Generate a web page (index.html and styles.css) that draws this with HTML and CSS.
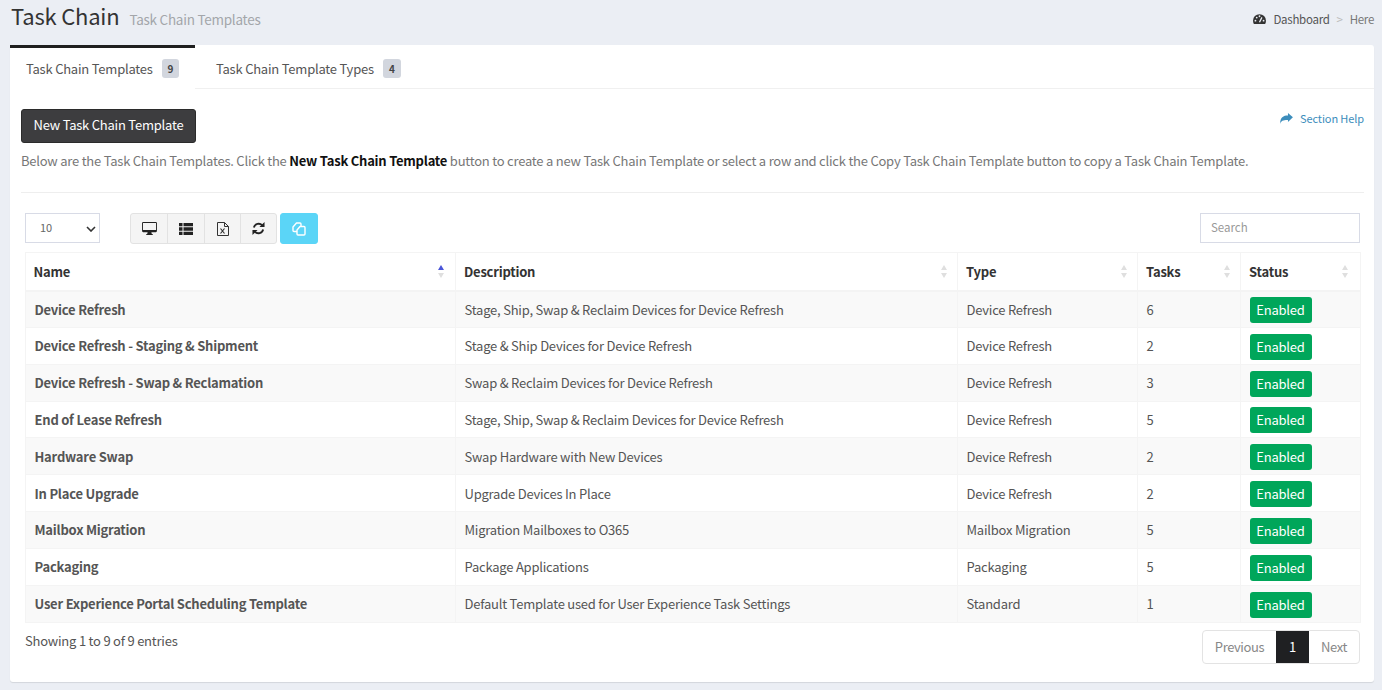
FILE: index.html
```html
<!DOCTYPE html>
<html lang="en">
<head>
<meta charset="utf-8">
<title>Task Chain</title>
<link rel="stylesheet" href="styles.css">
</head>
<body>
<header class="page-head">
  <div class="titles"><h1>Task Chain</h1><span class="subtitle">Task Chain Templates</span></div>
  <nav class="crumbs">
    <svg class="gauge" viewBox="0 0 16 14" width="13" height="12"><path fill="#333" d="M8 1a8 8 0 0 0-8 8c0 1.500.4 2.900 1.100 4h13.800A8 8 0 0 0 16 9a8 8 0 0 0-8-8z"/><circle cx="3" cy="9" r="1.100" fill="#ebeef4"/><circle cx="4.600" cy="5.200" r="1.100" fill="#ebeef4"/><circle cx="8" cy="3.600" r="1.100" fill="#ebeef4"/><circle cx="13" cy="9" r="1.100" fill="#ebeef4"/><path stroke="#ebeef4" stroke-width="1.600" d="M8 11l3-6"/></svg>
    <a class="crumb-link">Dashboard</a><span class="sep">&gt;</span><span class="here">Here</span>
  </nav>
</header>
<main class="card">
  <div class="tabs">
    <div class="tab active">Task Chain Templates <span class="badge">9</span></div>
    <div class="tab">Task Chain Template Types <span class="badge">4</span></div>
  </div>
  <div class="body">
    <div class="action-row">
      <button class="btn-new">New Task Chain Template</button>
      <a class="help"><svg viewBox="0 0 14 12" width="13" height="11"><path fill="#3c8dbc" d="M14 4.600 8.600 0v2.600C3.600 2.600 0 4.400 0 12c1-3.400 3.400-4.400 8.600-4.300V9.900z"/></svg><span>Section Help</span></a>
    </div>
    <p class="intro">Below are the Task Chain Templates. Click the <strong>New Task Chain Template</strong> button to create a new Task Chain Template or select a row and click the Copy Task Chain Template button to copy a Task Chain Template.</p>
    <hr class="rule">
    <div class="toolbar">
      <div class="select-wrap">
        <select class="length"><option>10</option></select>
        <svg class="chev" viewBox="0 0 10 6" width="10" height="6"><path fill="none" stroke="#333" stroke-width="1.600" d="M1 1l4 4 4-4"/></svg>
      </div>
      <div class="tools">
        <button class="tool"><svg viewBox="0 0 16 14" width="15" height="13"><path fill="#222" d="M1.200 0h13.600A1.200 1.200 0 0 1 16 1.200v8.600A1.200 1.200 0 0 1 14.800 11H1.200A1.200 1.200 0 0 1 0 9.800V1.200A1.200 1.200 0 0 1 1.200 0zM1 1v7.500h14V1zM6 11h4l.5 2h1v1h-7v-1h1z"/></svg></button>
        <button class="tool"><svg viewBox="0 0 14 12" width="14" height="12"><path fill="#222" d="M0 0h3.500v3.300H0zM4.500 0H14v3.300H4.500zM0 4.350h3.500v3.300H0zM4.500 4.350H14v3.300H4.500zM0 8.700h3.500V12H0zM4.500 8.700H14V12H4.500z"/></svg></button>
        <button class="tool"><svg viewBox="0 0 12 14" width="12" height="14"><path fill="none" stroke="#333" d="M.5.500h7l4 4v9H.5zM7.500.500v4h4"/><path fill="none" stroke="#333" stroke-width="1.200" d="M3.500 6.500l4 5M7.500 6.500l-4 5"/></svg></button>
        <button class="tool"><svg viewBox="0 0 14 14" width="13" height="13"><path fill="none" stroke="#222" stroke-width="2" d="M2 6a5.200 5.200 0 0 1 9-2.300M12 8a5.200 5.200 0 0 1-9 2.300"/><path fill="#222" d="M13.500 0v5.500H8zM.5 14V8.500H6z"/></svg></button>
        <button class="tool copy"><svg viewBox="0 0 14 14" width="14" height="14"><path fill="none" stroke="#fff" stroke-width="1.400" stroke-linejoin="round" d="M5 9.500H2a1 1 0 0 1-1-1V5l3.500-4H8a1 1 0 0 1 1 1v2.200"/><path fill="none" stroke="#fff" stroke-width="1.400" stroke-linejoin="round" d="M8 4.500h4a1 1 0 0 1 1 1V12a1 1 0 0 1-1 1H6a1 1 0 0 1-1-1V8z"/></svg></button>
      </div>
      <input class="search" placeholder="Search">
    </div>
    <table class="grid">
      <colgroup><col class="c-name"><col class="c-desc"><col class="c-type"><col class="c-tasks"><col class="c-status"></colgroup>
      <thead>
        <tr>
          <th>Name<span class="sort"><i class="up on"></i><i class="down"></i></span></th>
          <th>Description<span class="sort"><i class="up"></i><i class="down"></i></span></th>
          <th>Type<span class="sort"><i class="up"></i><i class="down"></i></span></th>
          <th>Tasks<span class="sort"><i class="up"></i><i class="down"></i></span></th>
          <th>Status<span class="sort"><i class="up"></i><i class="down"></i></span></th>
        </tr>
      </thead>
      <tbody>
        <tr><td class="nm">Device Refresh</td><td>Stage, Ship, Swap &amp; Reclaim Devices for Device Refresh</td><td>Device Refresh</td><td>6</td><td><span class="status">Enabled</span></td></tr>
        <tr><td class="nm">Device Refresh - Staging &amp; Shipment</td><td>Stage &amp; Ship Devices for Device Refresh</td><td>Device Refresh</td><td>2</td><td><span class="status">Enabled</span></td></tr>
        <tr><td class="nm">Device Refresh - Swap &amp; Reclamation</td><td>Swap &amp; Reclaim Devices for Device Refresh</td><td>Device Refresh</td><td>3</td><td><span class="status">Enabled</span></td></tr>
        <tr><td class="nm">End of Lease Refresh</td><td>Stage, Ship, Swap &amp; Reclaim Devices for Device Refresh</td><td>Device Refresh</td><td>5</td><td><span class="status">Enabled</span></td></tr>
        <tr><td class="nm">Hardware Swap</td><td>Swap Hardware with New Devices</td><td>Device Refresh</td><td>2</td><td><span class="status">Enabled</span></td></tr>
        <tr><td class="nm">In Place Upgrade</td><td>Upgrade Devices In Place</td><td>Device Refresh</td><td>2</td><td><span class="status">Enabled</span></td></tr>
        <tr><td class="nm">Mailbox Migration</td><td>Migration Mailboxes to O365</td><td>Mailbox Migration</td><td>5</td><td><span class="status">Enabled</span></td></tr>
        <tr><td class="nm">Packaging</td><td>Package Applications</td><td>Packaging</td><td>5</td><td><span class="status">Enabled</span></td></tr>
        <tr><td class="nm">User Experience Portal Scheduling Template</td><td>Default Template used for User Experience Task Settings</td><td>Standard</td><td>1</td><td><span class="status">Enabled</span></td></tr>
      </tbody>
    </table>
    <div class="foot">
      <div class="info">Showing 1 to 9 of 9 entries</div>
      <div class="pager"><span class="pg prev">Previous</span><span class="pg cur">1</span><span class="pg next">Next</span></div>
    </div>
  </div>
</main>
</body>
</html>
```
FILE: styles.css
```css
* { box-sizing: border-box; }
html, body { margin: 0; padding: 0; }
body {
  background: #ebeef4;
  font-family: "Noto Sans CJK SC", "Noto Sans", sans-serif;
  font-size: 13px;
  letter-spacing: -0.22px;
  color: #555;
  height: 690px;
  overflow: hidden;
}
.page-head {
  height: 45px;
  display: flex;
  justify-content: space-between;
  padding: 0 8px 0 11px;
}
.titles { display: flex; align-items: baseline; height: 32px; }
h1 { margin: 0; font-size: 22px; font-weight: 400; color: #333; line-height: 30px; letter-spacing: -0.2px; }
.subtitle { margin-left: 10px; font-size: 13.500px; letter-spacing: -0.25px; color: #a3a6aa; }
.crumbs { display: flex; align-items: center; height: 37px; font-size: 11.500px; letter-spacing: -0.28px; color: #777; }
.gauge { margin-right: 7px; }
.crumb-link { color: #555; }
.sep { margin: 0 7px; color: #bbb; }
.card {
  margin: 0 8px 0 10px;
  height: 637px;
  background: #fff;
  border-radius: 3px;
  box-shadow: 0 1px 1px rgba(0,0,0,.1);
}
.tabs { display: flex; height: 44px; border-bottom: 1px solid #f0f0f0; }
.tab {
  padding: 0 16px;
  height: 44px;
  display: flex;
  align-items: center;
  gap: 9px;
  white-space: nowrap;
  color: #555;
  margin-right: 5px;
  border-top: 2px solid transparent;
}
.tab.active { width: 185px; margin-right: 5px; border-top: 3px solid #1f1f1f; background: #fff; }
.badge {
  display: inline-block;
  width: 18px;
  height: 19px;
  line-height: 19px;
  text-align: center;
  background: #d2d6de;
  border-radius: 3px;
  font-size: 10px;
  font-weight: 700;
  letter-spacing: 0;
  color: #444;
}
.body { padding: 20px 10px 0 11px; }
.action-row { display: flex; justify-content: space-between; align-items: flex-start; }
.btn-new {
  width: 175px;
  height: 34px;
  background: #3d3d3f;
  border: 1px solid #2b2b2b;
  border-radius: 3px;
  color: #fff;
  font: 400 13px "Noto Sans CJK SC", "Noto Sans", sans-serif;
  letter-spacing: -0.22px;
  padding: 0 0 4px;
}
.help { display: flex; align-items: center; gap: 7px; font-size: 11px; letter-spacing: -0.1px; color: #3c8dbc; margin-top: 2px; height: 14px; }
.intro { margin: 8px 0 0; line-height: 20px; color: #777; white-space: nowrap; letter-spacing: -0.225px; }
.intro strong { color: #111; font-weight: 700; }
.rule { border: 0; border-top: 1px solid #eee; margin: 21px 0 20px; }
.toolbar { display: flex; align-items: flex-start; padding-left: 4px; height: 39px; }
.select-wrap { position: relative; width: 75px; height: 30px; }
.length {
  appearance: none;
  width: 75px;
  height: 30px;
  border: 1px solid #d8dbe6;
  background: #fff;
  border-radius: 0;
  padding: 0 0 2px 14px;
  font: 400 11px "Noto Sans CJK SC", "Noto Sans", sans-serif;
  color: #666;
}
.chev { position: absolute; right: 4px; top: 13px; }
.tools { display: flex; margin-left: 30px; }
.tool {
  width: 38px;
  height: 31px;
  background: #f4f4f4;
  border: 1px solid #e2e2e2;
  margin-left: -1px;
  padding: 0;
  display: flex;
  align-items: center;
  justify-content: center;
}
.tool:first-child { border-radius: 3px 0 0 3px; margin-left: 0; }
.tool:nth-child(3), .tool:nth-child(4) { width: 37px; }
.tool:nth-child(4) { border-radius: 0 3px 3px 0; }
.tool.copy { background: #5bd5f7; border-color: #5bd5f7; border-radius: 3px; margin-left: 3px; width: 38px; }
.search {
  margin-left: auto;
  margin-right: 4px;
  width: 160px;
  height: 30px;
  border: 1px solid #d8dbe6;
  padding: 0 10px 2px;
  font: 400 11.500px "Noto Sans CJK SC", "Noto Sans", sans-serif;
  outline: none;
}
.search::placeholder { color: #999; }
.grid {
  table-layout: fixed;
  width: 1335px;
  margin-left: 4px;
  border-collapse: collapse;
  border: 1px solid #f4f4f4;
}
.c-name { width: 430px; }
.c-desc { width: 502px; }
.c-type { width: 180px; }
.c-tasks { width: 103px; }
.c-status { width: 120px; }
th {
  position: relative;
  height: 38px;
  text-align: left;
  padding: 0 8px;
  font-weight: 700;
  color: #333;
  border: 1px solid #f4f4f4;
  border-bottom-width: 2px;
}
th:first-child { padding-left: 7.500px; }
td {
  height: 36.850px;
  padding: 0 8px 0 8.500px;
  color: #555;
  border: 1px solid #f4f4f4;
  white-space: nowrap;
}
td.nm { font-weight: 700; padding-left: 8.500px; }
tbody tr:nth-child(odd) { background: #f9f9f9; }
.sort { position: absolute; right: 10px; top: 12px; display: flex; flex-direction: column; gap: 3px; }
th:first-child .sort { right: 11px; }
th:last-child .sort { right: 12px; }
.sort i { display: block; width: 0; height: 0; border-left: 3px solid transparent; border-right: 3px solid transparent; }
.sort .up { border-bottom: 5px solid #dfdfdf; }
.sort .down { border-top: 5px solid #dfdfdf; }
.sort .up.on { border-bottom-color: #4a55d8; }
.status {
  display: inline-block;
  width: 62px;
  height: 26px;
  margin-top: 2px;
  line-height: 25px;
  text-align: center;
  background: #00a65a;
  border-radius: 3px;
  color: #fff;
  vertical-align: middle;
}
.foot { display: flex; justify-content: space-between; align-items: flex-start; padding-left: 4px; padding-top: 7px; }
.info { line-height: 20px; margin-top: 1px; color: #555; }
.pager {
  display: flex;
  height: 34px;
  border: 1px solid #e3e3e3;
  border-radius: 4px;
  margin-right: 4px;
  overflow: hidden;
}
.pg { line-height: 32px; text-align: center; letter-spacing: -0.4px; color: #888; }
.prev { width: 73px; }
.next { width: 50px; }
.pg.cur { width: 33px; background: #1f2022; color: #fff; }
```
